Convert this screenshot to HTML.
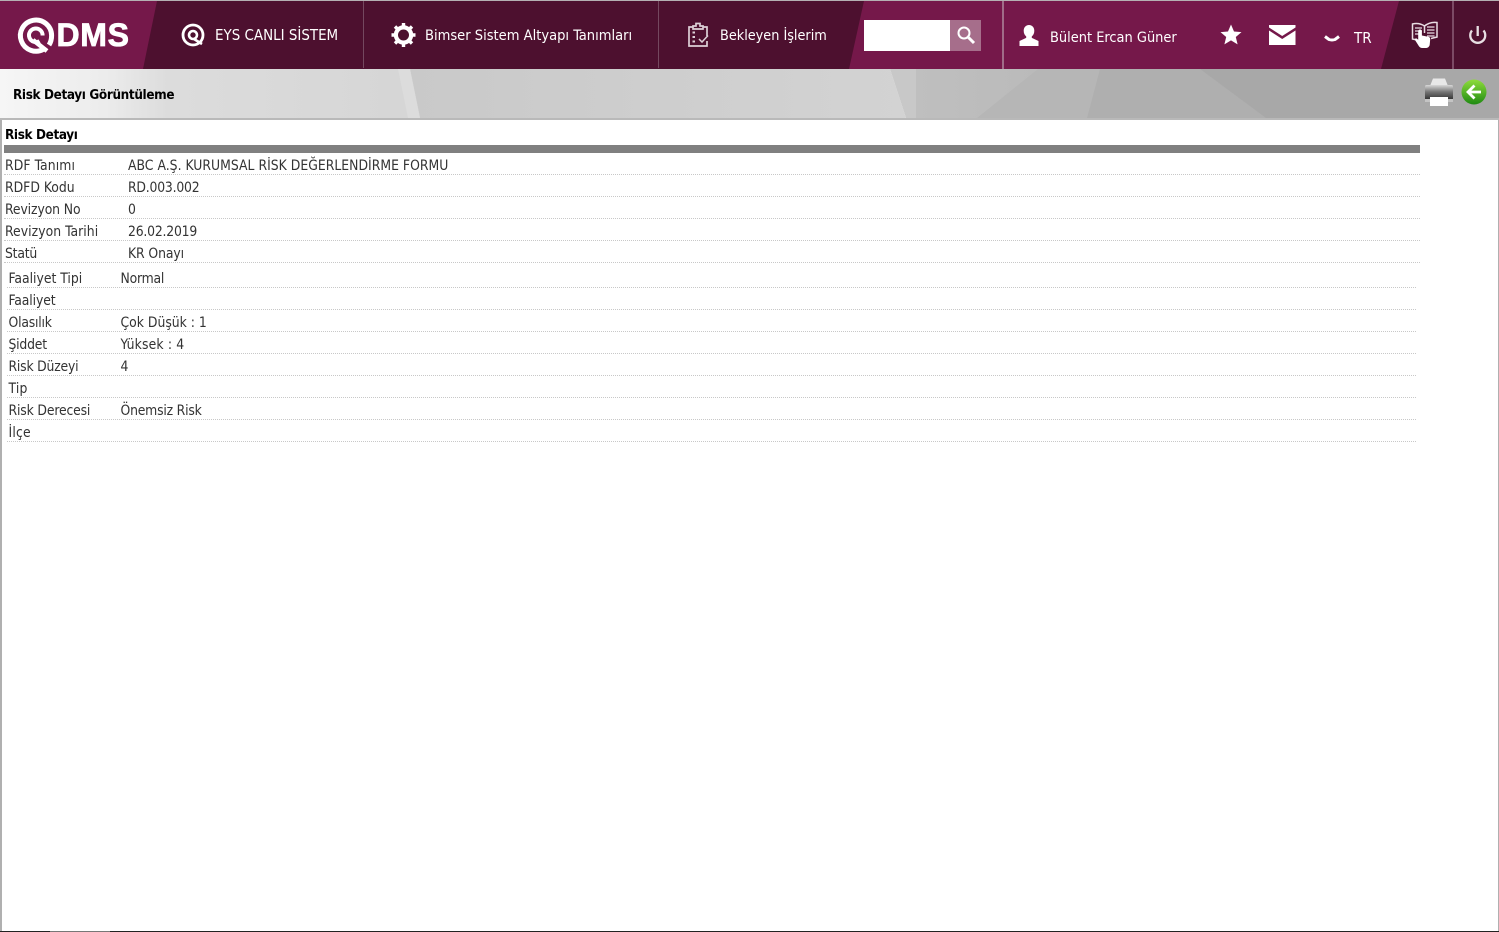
<!DOCTYPE html>
<html lang="tr"><head><meta charset="utf-8"><title>Risk Detayı Görüntüleme</title>
<style>
html,body{margin:0;padding:0;background:#fff;width:1499px;height:932px;overflow:hidden}
body{position:relative;font-family:"DejaVu Sans Condensed","Liberation Sans",sans-serif}
svg{position:absolute;left:0;top:0}
.t{position:absolute;white-space:nowrap;font-size:13.8px;line-height:16px;color:#333}
.h{color:#fff;font-size:14.5px;line-height:18px}
.b{color:#000;font-weight:bold;font-size:13.4px;letter-spacing:-.35px}
.d{position:absolute;height:0;border-top:1px dotted #c8c8c8}
</style></head><body>
<svg width="1499" height="932" viewBox="0 0 1499 932">
<defs>
<linearGradient id="g1" gradientUnits="userSpaceOnUse" x1="0" x2="420" y1="0" y2="0"><stop offset="0" stop-color="#f6f6f6"/><stop offset=".25" stop-color="#ececec"/><stop offset=".4" stop-color="#dcdcdc"/><stop offset=".95" stop-color="#d6d6d6"/></linearGradient>
<linearGradient id="g2" gradientUnits="userSpaceOnUse" x1="410" x2="906" y1="0" y2="0"><stop offset="0" stop-color="#c9c9c9"/><stop offset="1" stop-color="#d3d3d3"/></linearGradient>
<linearGradient id="g3" gradientUnits="userSpaceOnUse" x1="916" x2="1499" y1="0" y2="0"><stop offset="0" stop-color="#bfbfbf"/><stop offset="1" stop-color="#a8a8a8"/></linearGradient>
<linearGradient id="gb" x1="0" y1="0" x2="0" y2="1"><stop offset="0" stop-color="#8fdc3c"/><stop offset="1" stop-color="#1f8a12"/></linearGradient>
<linearGradient id="gp" x1="0" y1="0" x2="0" y2="1"><stop offset="0" stop-color="#d8d8d8"/><stop offset=".45" stop-color="#777"/><stop offset="1" stop-color="#2e2e2e"/></linearGradient>
</defs>
<rect width="1499" height="932" fill="#fff"/>
<path d="M0 69H410L420 118H0Z" fill="url(#g1)"/>
<path d="M398 69H410L420 118H408Z" fill="#dcdcdc"/>
<path d="M410 69H890L906 118H420Z" fill="url(#g2)"/>
<path d="M890 69H916V118H906Z" fill="#c8c8c8"/>
<path d="M916 69H1499V118H916Z" fill="url(#g3)"/>
<path d="M1038 69H1100L1087 118H977Z" fill="#b6b6b6"/>
<path d="M1100 69H1200L1266 118H1087Z" fill="#afafaf"/>
<path d="M1266 118L1200 69H1499V118Z" fill="#a8a8a8"/>
<rect y="118" width="1499" height="2" fill="#b9b9b9"/>
<rect y="0" width="1499" height="69" fill="#75184a"/>
<rect y="0" width="1499" height="1" fill="#b5b0b3"/>
<path d="M157 1H864L849 69H143Z" fill="#4d102f"/>
<path d="M1399 1H1499V69H1381Z" fill="#4d102f"/>
<rect x="363" y="1" width="1" height="67" fill="#74485f"/>
<rect x="658" y="1" width="1" height="67" fill="#74485f"/>
<rect x="1002" y="1" width="2" height="68" fill="#a06c88"/>
<rect x="1452" y="1" width="2" height="68" fill="#7c4a65"/>
<!-- logo -->
<g fill="none" stroke="#fff">
<path d="M44 49A15.600 15.600 0 1 1 51.600 35.500Q51.600 41 49 45" stroke-width="5"/>
<path d="M39.500 41A6.800 6.800 0 1 1 42.600 35.500" stroke-width="4"/>
<path d="M33 40L47 51" stroke-width="4.600"/>
</g>
<!-- eys icon -->
<g fill="none" stroke="#fff">
<circle cx="193" cy="35" r="10" stroke-width="2.800"/>
<circle cx="193" cy="35" r="4" stroke-width="2.600"/>
<path d="M194 39L202 44" stroke-width="2.600"/>
</g>
<!-- gear -->
<g fill="none" stroke="#fff">
<circle cx="403.500" cy="35" r="7.600" stroke-width="4.200"/>
<path d="M403.500 23V27M403.500 43V47M391.500 35H395.500M411.500 35H415.500M395 26.500L398 29.500M409 40.500L412 43.500M412 26.500L409 29.500M398 40.500L395 43.500" stroke-width="3.400"/>
</g>
<!-- clipboard -->
<g fill="none" stroke="#ddd0d7" stroke-width="1.700">
<path d="M693 27H689V46H707V41M703 27H707V36"/>
<path d="M693 29V26H696V23.500H700V26H703V29Z"/>
<path d="M692.500 32.500H695M692.500 37H695M692.500 41.500H695" stroke-width="2"/>
<path d="M699 39L702 42L708 35.500" stroke-width="1.500"/>
</g>
<!-- search -->
<rect x="864" y="20" width="86" height="31" fill="#fff"/>
<rect x="950" y="20" width="31" height="31" fill="#a66e8b"/>
<g fill="none" stroke="#fff"><circle cx="964" cy="33" r="5.500" stroke-width="2"/><path d="M968.500 37.500L974 43" stroke-width="3"/></g>
<!-- user -->
<path d="M1029 25c3.300 0 5.300 2.600 5.300 5.800 0 2.600-1 4.500-2.500 5.600v1.500l6.700 3.100v5h-19v-5l6.700-3.100v-1.500c-1.500-1.100-2.500-3-2.500-5.600 0-3.200 2-5.800 5.300-5.800z" fill="#fff"/>
<!-- star -->
<path d="M1231 24.500l3 7 7.500.6-5.700 4.900 1.800 7.400-6.600-4-6.600 4 1.800-7.400-5.700-4.900 7.500-.6z" fill="#fff"/>
<!-- mail -->
<path d="M1269 25H1295.500V27.500L1282.200 36L1269 27.500Z" fill="#fff"/>
<path d="M1269 30.500L1282.200 39L1295.500 30.500V45H1269Z" fill="#fff"/>
<!-- chevron -->
<path d="M1325 36.500L1329 39.500Q1332 40.500 1335 39.500L1339 36.500" fill="none" stroke="#fff" stroke-width="3"/>
<!-- book -->
<g fill="none" stroke="#e9dde3" stroke-width="1.500">
<path d="M1424.500 26Q1419 22.500 1412.500 24V39L1417 40"/>
<path d="M1424.500 26Q1430 21.500 1437 22.500V37L1431 38.500"/>
<path d="M1424.500 26V33"/>
<path d="M1415 28H1422M1415 31H1422M1415 34H1420M1427 27H1434.500M1427 30H1434.500M1427 33H1434.500M1427 36H1434.500" stroke-width="1.300"/>
</g>
<path d="M1420 29.500c1.500 0 1.900 1 1.900 2.200v3.800l6.300 1.200c1.500.3 2 1.200 2 2.600l-.5 5.500c-.2 1.500-1.500 3.200-3.500 3.200h-4c-1.500 0-2.500-.6-3.400-2l-3.800-6c-.5-1 .8-2.200 2-1.300l1.200 1V31.700c0-1.200.4-2.200 1.800-2.200z" fill="#fff"/>
<!-- power -->
<g fill="none" stroke="#e8dfe3" stroke-width="2.300"><path d="M1472 30.500A7.500 7.500 0 1 0 1483.500 30.500"/><path d="M1477.700 26V36"/></g>
<!-- printer -->
<path d="M1430 86L1433 78.500H1445L1448 86Z" fill="#e8e8e8"/>
<rect x="1425" y="85" width="28" height="15" rx="1.500" fill="url(#gp)"/>
<rect x="1425" y="99" width="28" height="3" fill="#c4c4c4"/>
<rect x="1430" y="97" width="18" height="9" fill="#fff"/>
<!-- back -->
<circle cx="1474" cy="92" r="12.500" fill="url(#gb)"/>
<path d="M1474.500 85.500L1468 92L1474.500 98.500M1468.500 92H1481" fill="none" stroke="#fff" stroke-width="2.800"/>
<!-- frame -->
<rect x="0" y="120" width="2" height="812" fill="#b0b0b0"/>
<rect x="1498" y="120" width="1" height="812" fill="#b0b0b0"/>
<rect x="0" y="931" width="1499" height="1" fill="#222"/>
<rect x="50" y="931" width="60" height="1" fill="#777"/>
<rect x="4" y="145" width="1416" height="8" fill="#808080"/>
</svg>
<div class="t" style="left:56.5px;top:18px;color:#fff;font:bold 32px/34px 'Liberation Sans',sans-serif;letter-spacing:.7px;-webkit-text-stroke:.8px #fff">DMS</div>
<div class="t h" style="left:215px;top:26px;font-size:14.95px">EYS CANLI SİSTEM</div>
<div class="t h" style="left:425px;top:27px;font-size:14.55px">Bimser Sistem Altyapı Tanımları</div>
<div class="t h" style="left:720px;top:27px;font-size:14.3px">Bekleyen İşlerim</div>
<div class="t h" style="left:1050px;top:29px;font-size:14.45px">Bülent Ercan Güner</div>
<div class="t h" style="left:1354px;top:29px;font-size:15px">TR</div>
<div class="t b" style="left:13px;top:88px">Risk Detayı Görüntüleme</div>
<div class="t b" style="left:5px;top:128px">Risk Detayı</div>

<div class="t" style="left:5px;top:158px;letter-spacing:.1px">RDF Tanımı</div><div class="t" style="left:128px;top:158px;letter-spacing:.02px">ABC A.Ş. KURUMSAL RİSK DEĞERLENDİRME FORMU</div><div class="d" style="left:4px;top:174px;width:1416px"></div>
<div class="t" style="left:5px;top:180px">RDFD Kodu</div><div class="t" style="left:128px;top:180px;letter-spacing:-.2px">RD.003.002</div><div class="d" style="left:4px;top:196px;width:1416px"></div>
<div class="t" style="left:5px;top:202px;letter-spacing:-.1px">Revizyon No</div><div class="t" style="left:128px;top:202px">0</div><div class="d" style="left:4px;top:218px;width:1416px"></div>
<div class="t" style="left:5px;top:224px;letter-spacing:.05px">Revizyon Tarihi</div><div class="t" style="left:128px;top:224px;letter-spacing:-.2px">26.02.2019</div><div class="d" style="left:4px;top:240px;width:1416px"></div>
<div class="t" style="left:5px;top:246px;letter-spacing:-.2px">Statü</div><div class="t" style="left:128px;top:246px;letter-spacing:-.1px">KR Onayı</div><div class="d" style="left:4px;top:262px;width:1416px"></div>

<div class="t" style="left:8.5px;top:271px">Faaliyet Tipi</div><div class="t" style="left:120.5px;top:271px;letter-spacing:-.2px">Normal</div><div class="d" style="left:7px;top:287px;width:1409px"></div>
<div class="t" style="left:8.5px;top:293px;letter-spacing:-.1px">Faaliyet</div><div class="d" style="left:7px;top:309px;width:1409px"></div>
<div class="t" style="left:8.5px;top:315px;letter-spacing:-.2px">Olasılık</div><div class="t" style="left:120.5px;top:315px">Çok Düşük : 1</div><div class="d" style="left:7px;top:331px;width:1409px"></div>
<div class="t" style="left:8.5px;top:337px;letter-spacing:-.2px">Şiddet</div><div class="t" style="left:120.5px;top:337px;letter-spacing:.15px">Yüksek : 4</div><div class="d" style="left:7px;top:353px;width:1409px"></div>
<div class="t" style="left:8.5px;top:359px;letter-spacing:-.2px">Risk Düzeyi</div><div class="t" style="left:120.5px;top:359px">4</div><div class="d" style="left:7px;top:375px;width:1409px"></div>
<div class="t" style="left:8.5px;top:381px;letter-spacing:.2px">Tip</div><div class="d" style="left:7px;top:397px;width:1409px"></div>
<div class="t" style="left:8.5px;top:403px;letter-spacing:-.15px">Risk Derecesi</div><div class="t" style="left:120.5px;top:403px;letter-spacing:-.2px">Önemsiz Risk</div><div class="d" style="left:7px;top:419px;width:1409px"></div>
<div class="t" style="left:8.5px;top:425px;letter-spacing:.2px">İlçe</div><div class="d" style="left:7px;top:441px;width:1409px"></div>
</body></html>
